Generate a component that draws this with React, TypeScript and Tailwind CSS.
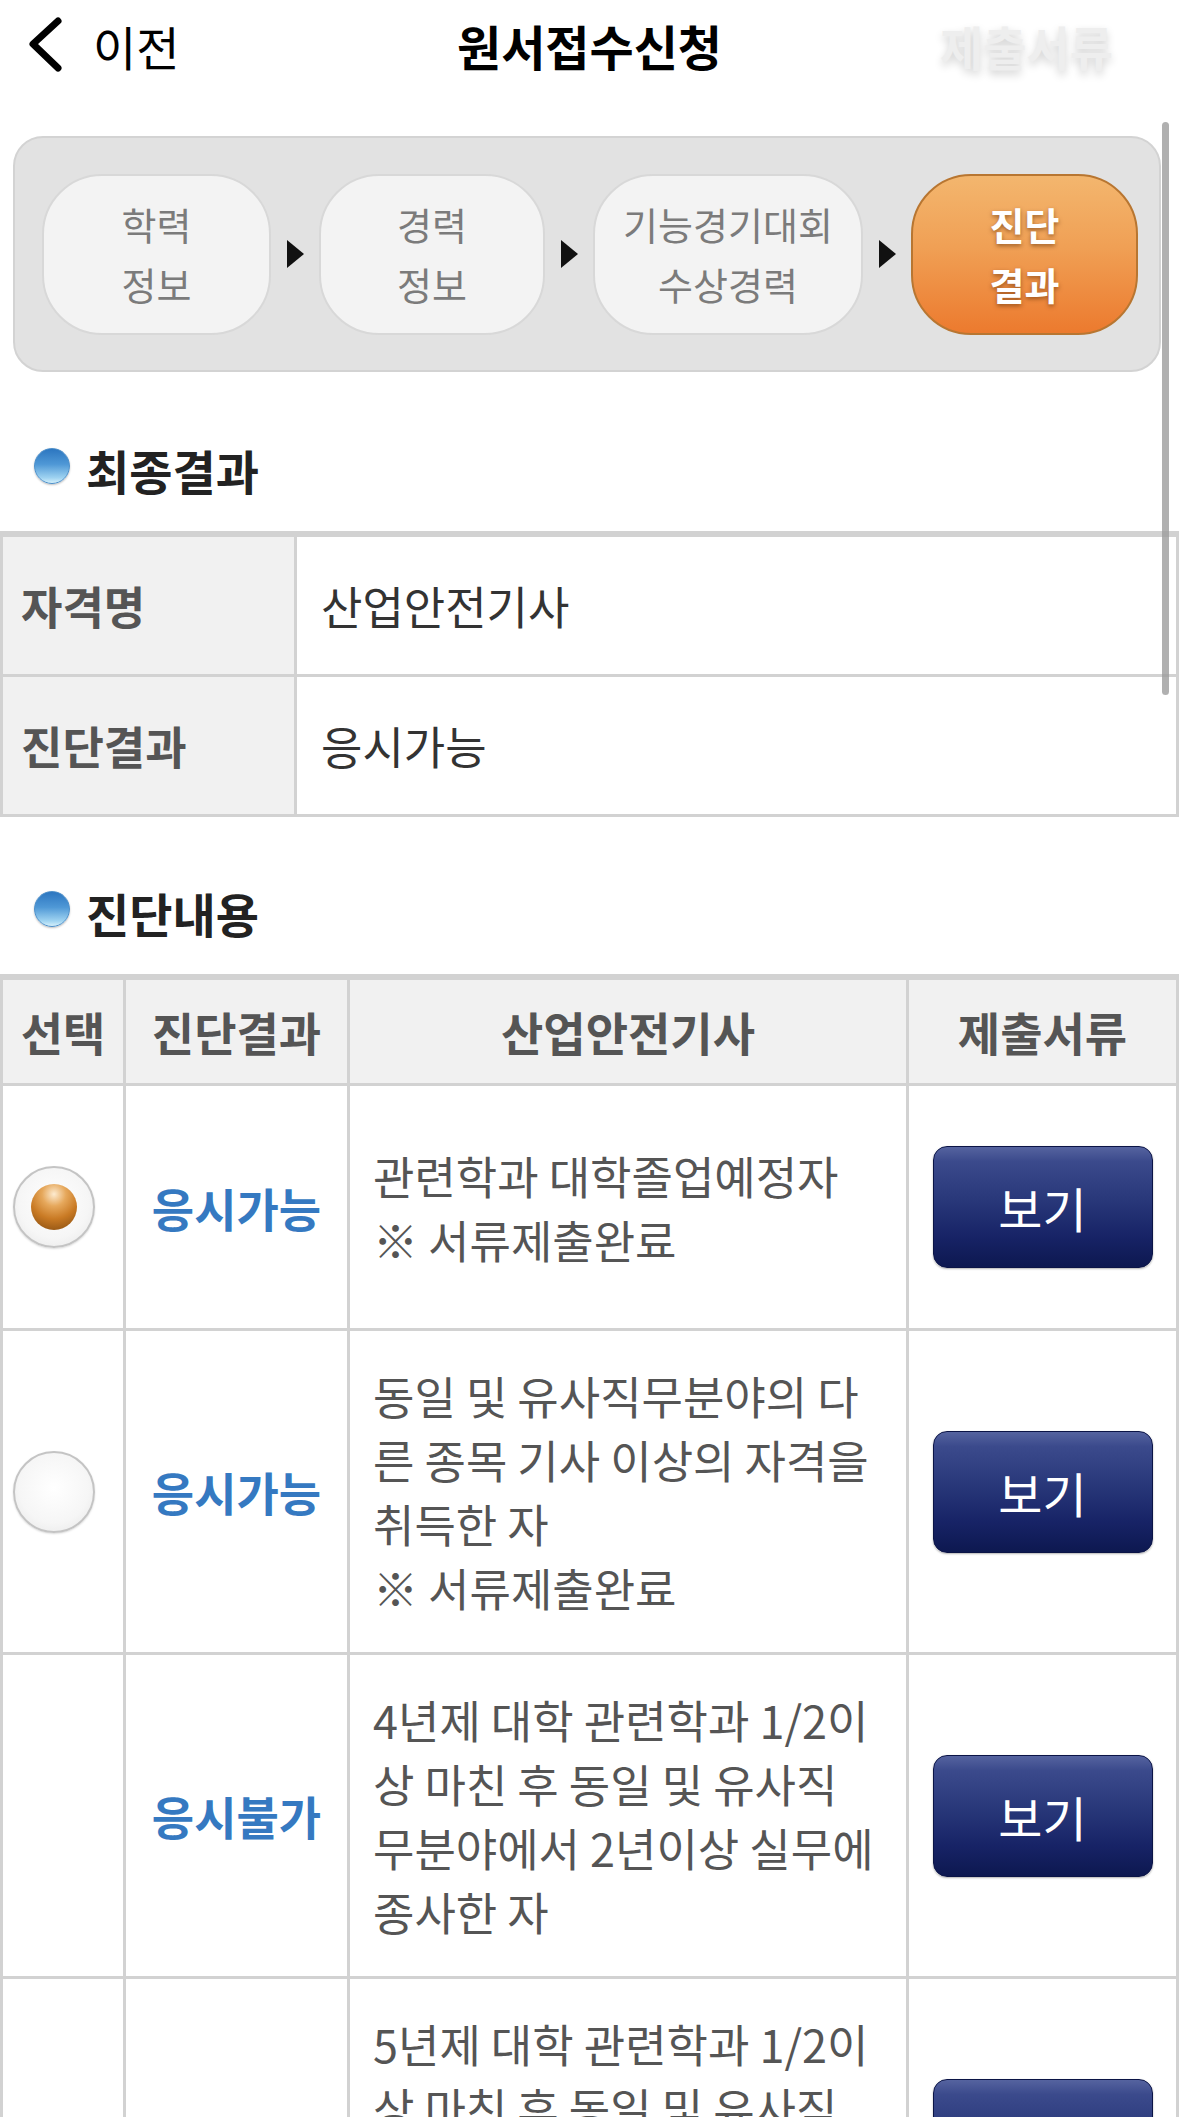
import React from "react";

type Row = {
  selected: boolean | null;
  result: string;
  lines: string[];
  tall?: boolean;
};

const rows: Row[] = [
  {
    selected: true,
    result: "응시가능",
    lines: ["관련학과 대학졸업예정자", "※ 서류제출완료"],
    tall: true,
  },
  {
    selected: false,
    result: "응시가능",
    lines: [
      "동일 및 유사직무분야의 다",
      "른 종목 기사 이상의 자격을",
      "취득한 자",
      "※ 서류제출완료",
    ],
  },
  {
    selected: null,
    result: "응시불가",
    lines: [
      "4년제 대학 관련학과 1/2이",
      "상 마친 후 동일 및 유사직",
      "무분야에서 2년이상 실무에",
      "종사한 자",
    ],
  },
  {
    selected: null,
    result: "응시불가",
    lines: [
      "5년제 대학 관련학과 1/2이",
      "상 마친 후 동일 및 유사직",
      "무분야에서 1년이상 실무에",
      "종사한 자",
    ],
  },
];

const StepArrow = () => (
  <div className="flex w-[48px] shrink-0 justify-center">
    <svg width="17" height="28" viewBox="0 0 17 28">
      <path d="M0 0 L17 14 L0 28 Z" fill="#111" />
    </svg>
  </div>
);

const Step = ({ top, bottom, width }: { top: string; bottom: string; width: string }) => (
  <div
    className={`flex h-[161px] ${width} shrink-0 flex-col items-center justify-center rounded-[60px] border-2 border-[#d8d8d8] bg-[#f3f3f3] text-[38px] leading-[60px] text-[#7b7b7b]`}
  >
    <span>{top}</span>
    <span>{bottom}</span>
  </div>
);

const SectionTitle = ({ children }: { children: React.ReactNode }) => (
  <div className="flex h-[60px] items-center pl-[34px]">
    <span className="mt-[-8px] h-[36px] w-[36px] rounded-full border border-[#4d8fc9] bg-[linear-gradient(to_bottom,#2c76c0_0%,#4f98d6_45%,#9fd3f1_85%,#d5f0fb_100%)] shadow-[0_1px_2px_rgba(0,0,0,0.25)]" />
    <span className="ml-[16px] text-[47px] font-bold leading-[60px] text-[#222]">{children}</span>
  </div>
);

const Radio = ({ checked }: { checked: boolean }) => (
  <div className="flex h-[82px] w-[82px] items-center justify-center rounded-full border-2 border-[#c4c4c4] bg-[radial-gradient(circle_at_50%_45%,#ffffff_0%,#f6f6f6_60%,#e4e4e4_100%)] shadow-[0_1px_2px_rgba(0,0,0,0.15)]">
    {checked && (
      <div className="h-[46px] w-[46px] rounded-full bg-[radial-gradient(circle_at_50%_22%,#fdebd0_0%,#e6a85c_28%,#c97a24_58%,#9a5a16_85%,#7d4710_100%)]" />
    )}
  </div>
);

const ViewButton = () => (
  <button
    type="button"
    className="h-[122px] w-[220px] rounded-[14px] border border-[#0b1446] bg-[linear-gradient(to_bottom,#55639f_0%,#3b4a8c_12%,#283779_45%,#172366_75%,#0d1850_100%)] text-[48px] text-white shadow-[0_1px_2px_rgba(0,0,0,0.3)]"
  >
    보기
  </button>
);

export default function App() {
  return (
    <div className="relative h-[2117px] w-[1179px] overflow-hidden bg-white font-['Noto_Sans_CJK_KR','Noto_Sans',sans-serif]">
      {/* header */}
      <header className="grid h-[90px] grid-cols-[1fr_auto_1fr] items-center">
        <div className="flex items-center pl-[25px]">
          <svg width="40" height="60" viewBox="0 0 40 60">
            <polyline
              points="33,6 8,29 33,53"
              fill="none"
              stroke="#000"
              strokeWidth="7"
              strokeLinecap="round"
              strokeLinejoin="round"
            />
          </svg>
          <span className="ml-[28px] text-[47px] leading-none text-black">이전</span>
        </div>
        <h1 className="text-[48px] font-bold leading-none text-black">원서접수신청</h1>
        <div className="flex justify-end pr-[66px]">
          <span className="text-[47px] font-bold leading-none text-[#eeeeee] [text-shadow:0_4px_8px_rgba(0,0,0,0.18)]">
            제출서류
          </span>
        </div>
      </header>

      {/* steps */}
      <div className="ml-[13px] mt-[46px] flex h-[236px] w-[1148px] items-center rounded-[30px] border-2 border-[#d3d3d3] bg-[#e2e2e2] pl-[27px]">
        <Step top="학력" bottom="정보" width="w-[229px]" />
        <StepArrow />
        <Step top="경력" bottom="정보" width="w-[226px]" />
        <StepArrow />
        <Step top="기능경기대회" bottom="수상경력" width="w-[270px]" />
        <StepArrow />
        <div className="flex h-[161px] w-[227px] shrink-0 flex-col items-center justify-center rounded-[60px] border-2 border-[#b87631] bg-[linear-gradient(to_bottom,#f3b66e_0%,#f0a055_45%,#ec7a2e_100%)] text-[38px] font-bold leading-[60px] text-white [text-shadow:0_2px_4px_rgba(90,40,0,0.55)]">
          <span>진단</span>
          <span>결과</span>
        </div>
      </div>

      {/* final result */}
      <div className="mt-[68px]">
        <SectionTitle>최종결과</SectionTitle>
      </div>
      <div className="mt-[31px] grid grid-cols-[294px_1fr] border-l-[3px] border-t-[6px] border-[#d2d2d2]">
        <div className="flex h-[140px] items-center border-b-[3px] border-r-[3px] border-[#d2d2d2] bg-[#f1f1f1] pl-[18px] text-[45px] font-bold text-[#555]">
          자격명
        </div>
        <div className="flex h-[140px] items-center border-b-[3px] border-r-[3px] border-[#d2d2d2] pl-[24px] text-[45px] text-[#333]">
          산업안전기사
        </div>
        <div className="flex h-[140px] items-center border-b-[3px] border-r-[3px] border-[#d2d2d2] bg-[#f1f1f1] pl-[18px] text-[45px] font-bold text-[#555]">
          진단결과
        </div>
        <div className="flex h-[140px] items-center border-b-[3px] border-r-[3px] border-[#d2d2d2] pl-[24px] text-[45px] text-[#333]">
          응시가능
        </div>
      </div>

      {/* diagnosis detail */}
      <div className="mt-[66px]">
        <SectionTitle>진단내용</SectionTitle>
      </div>
      <div className="mt-[31px] grid grid-cols-[123px_224px_559px_1fr] border-l-[3px] border-t-[6px] border-[#d2d2d2]">
        {["선택", "진단결과", "산업안전기사", "제출서류"].map((h) => (
          <div
            key={h}
            className="flex h-[106px] items-center justify-center border-b-[3px] border-r-[3px] border-[#d2d2d2] bg-[#f1f1f1] text-[46px] font-bold text-[#555]"
          >
            {h}
          </div>
        ))}
        {rows.map((r, i) => (
          <React.Fragment key={i}>
            <div
              className={`flex items-center border-b-[3px] border-r-[3px] border-[#d2d2d2] pl-[10px] ${
                r.tall ? "min-h-[245px]" : ""
              }`}
            >
              {r.selected !== null && <Radio checked={r.selected} />}
            </div>
            <div className="flex items-center justify-center border-b-[3px] border-r-[3px] border-[#d2d2d2] text-[46px] font-bold text-[#3579c1]">
              {r.result}
            </div>
            <div className="flex flex-col justify-center border-b-[3px] border-r-[3px] border-[#d2d2d2] pb-[32px] pl-[23px] pt-[33px] text-[45px] leading-[64px] text-[#555]">
              {r.lines.map((l) => (
                <div key={l} className="whitespace-nowrap">
                  {l}
                </div>
              ))}
            </div>
            <div className="flex items-center justify-center border-b-[3px] border-r-[3px] border-[#d2d2d2]">
              <ViewButton />
            </div>
          </React.Fragment>
        ))}
      </div>

      {/* overlay scrollbar */}
      <div className="absolute right-[10px] top-[122px] h-[573px] w-[7px] rounded-full bg-[#9c9c9c]/80" />
    </div>
  );
}
